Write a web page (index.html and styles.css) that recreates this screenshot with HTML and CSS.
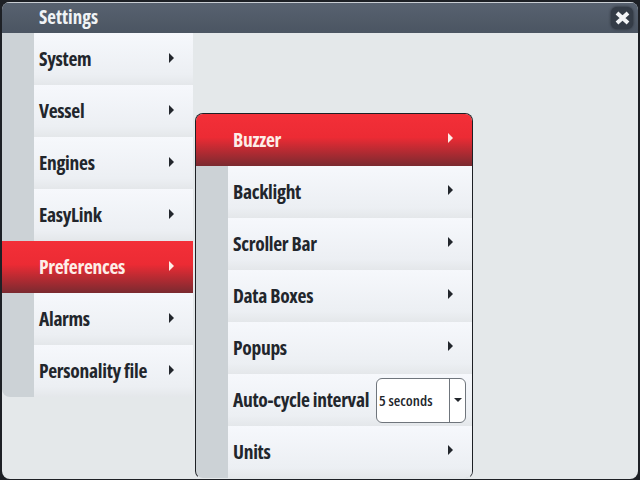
FILE: index.html
```html
<!DOCTYPE html>
<html lang="en">
<head>
    <meta charset="UTF-8">
    <title>Settings</title>
    <link rel="stylesheet" href="styles.css">
</head>
<body>
    <div class="window">
        <div class="title-bar">
            <span class="title">Settings</span>
            <div class="close-btn">
                <svg width="17" height="14" viewBox="0 0 17 14"><path d="M3 2 L14 12 M14 2 L3 12" stroke="#f2f4f6" stroke-width="4"/></svg>
            </div>
        </div>
        <div class="menu main-menu">
            <div class="row"><span class="label">System</span><span class="arrow"></span></div>
            <div class="row"><span class="label">Vessel</span><span class="arrow"></span></div>
            <div class="row"><span class="label">Engines</span><span class="arrow"></span></div>
            <div class="row"><span class="label">EasyLink</span><span class="arrow"></span></div>
            <div class="row active"><span class="label">Preferences</span><span class="arrow"></span></div>
            <div class="row"><span class="label">Alarms</span><span class="arrow"></span></div>
            <div class="row"><span class="label">Personality file</span><span class="arrow"></span></div>
        </div>
        <div class="menu sub-menu">
            <div class="row active"><span class="label">Buzzer</span><span class="arrow"></span></div>
            <div class="row"><span class="label">Backlight</span><span class="arrow"></span></div>
            <div class="row"><span class="label">Scroller Bar</span><span class="arrow"></span></div>
            <div class="row"><span class="label">Data Boxes</span><span class="arrow"></span></div>
            <div class="row"><span class="label">Popups</span><span class="arrow"></span></div>
            <div class="row">
                <span class="label">Auto-cycle interval</span>
                <div class="dropdown">
                    <span class="dropdown-value">5 seconds</span>
                    <span class="dropdown-btn"><span class="caret"></span></span>
                </div>
            </div>
            <div class="row"><span class="label">Units</span><span class="arrow"></span></div>
        </div>
    </div>
</body>
</html>
```

FILE: styles.css
```css
html, body {
    margin: 0;
    height: 100%;
    background-color: #1d2025;
    overflow: hidden;
}
body {
    font-family: "Open Sans", "Noto Sans", "Liberation Sans", sans-serif;
    font-weight: bold;
    font-stretch: 75%;
    white-space: nowrap;
}
.window {
    position: relative;
    width: 636px;
    height: 477px;
    margin: 2px 2px 0;
    overflow: hidden;
    border-radius: 8px;
    background-color: #e4e8ea;
}
.title-bar {
    height: 31px;
    display: flex;
    align-items: center;
    justify-content: space-between;
    padding: 0 5px 0 37px;
    background: linear-gradient(#586270, #4b5562);
    box-shadow: inset 0 1px #c9ced3;
}
.title {
    color: #f0f3f5;
    font-size: 19px;
    padding-bottom: 2px;
}
.close-btn {
    width: 22px;
    height: 22px;
    display: flex;
    align-items: center;
    justify-content: center;
    border-radius: 6px;
    background-color: #343c47;
    box-shadow: 0 0 3px #20252c;
}
.menu {
    background-color: #ccd2d6;
    background-clip: padding-box;
}
.main-menu {
    width: 191px;
    border-radius: 0 0 0 8px;
}
.sub-menu {
    position: absolute;
    left: 193px;
    top: 111px;
    width: 276px;
    height: 364px;
    border: 1px solid #1d2025;
    border-bottom-color: transparent;
    border-radius: 8px;
    overflow: hidden;
}
.row {
    height: 52px;
    margin-left: 32px;
    display: flex;
    align-items: center;
    justify-content: space-between;
    padding: 0 19px 0 5px;
    box-sizing: border-box;
    color: #22262c;
    font-size: 19.5px;
    letter-spacing: -0.3px;
    background: linear-gradient(#f6f8fc, #eceff3 80%, #e4e7ea);
}
.label {
    padding-bottom: 2px;
}
.row.active {
    margin-left: 0;
    padding-left: 37px;
    color: #fdeee8;
    background: linear-gradient(#f32f38, #ec2b34 45%, #7a2a30);
}
.arrow {
    width: 0;
    height: 0;
    margin-bottom: 3px;
    border-left: 5px solid #22262c;
    border-top: 5px solid transparent;
    border-bottom: 5px solid transparent;
}
.active .arrow {
    border-left-color: #fdeee8;
}
.sub-menu .arrow {
    margin-bottom: 5px;
}
.sub-menu .row:has(.dropdown) {
    padding-right: 6px;
}
.dropdown {
    flex: none;
    width: 88px;
    height: 43px;
    display: flex;
    background-color: #fff;
    border: 1px solid #6f757c;
    border-radius: 6px;
    font-size: 15px;
    font-weight: 600;
    letter-spacing: 0;
}
.dropdown-value {
    flex: 1;
    padding-left: 2px;
    line-height: 43px;
}
.dropdown-btn {
    width: 15px;
    display: flex;
    align-items: center;
    justify-content: center;
    border-left: 1px solid #6f757c;
}
.caret {
    width: 0;
    height: 0;
    border-top: 4px solid #22262c;
    border-left: 4px solid transparent;
    border-right: 4px solid transparent;
}
```
